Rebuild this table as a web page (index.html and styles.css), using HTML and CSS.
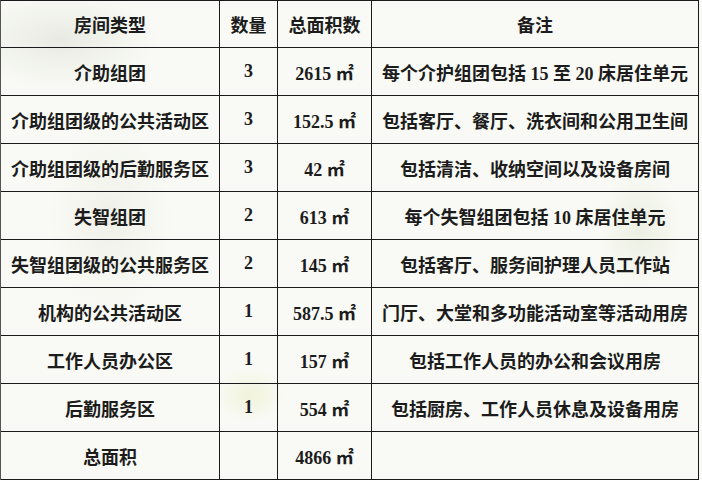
FILE: index.html
```html
<!DOCTYPE html>
<html lang="zh">
<head>
<meta charset="utf-8">
<title>房间类型</title>
<link rel="stylesheet" href="styles.css">
</head>
<body>
<div class="sheet">
  <div class="grid">
    <div class="cell head">房间类型</div>
    <div class="cell head">数量</div>
    <div class="cell head">总面积数</div>
    <div class="cell head">备注</div>

    <div class="cell">介助组团</div>
    <div class="cell num">3</div>
    <div class="cell num">2615 ㎡</div>
    <div class="cell"><span>每个介护组团包括 15 至 20 床居住单元</span></div>

    <div class="cell">介助组团级的公共活动区</div>
    <div class="cell num">3</div>
    <div class="cell num">152.5 ㎡</div>
    <div class="cell">包括客厅、餐厅、洗衣间和公用卫生间</div>

    <div class="cell">介助组团级的后勤服务区</div>
    <div class="cell num">3</div>
    <div class="cell num">42 ㎡</div>
    <div class="cell">包括清洁、收纳空间以及设备房间</div>

    <div class="cell">失智组团</div>
    <div class="cell num">2</div>
    <div class="cell num">613 ㎡</div>
    <div class="cell"><span>每个失智组团包括 10 床居住单元</span></div>

    <div class="cell">失智组团级的公共服务区</div>
    <div class="cell num">2</div>
    <div class="cell num">145 ㎡</div>
    <div class="cell">包括客厅、服务间护理人员工作站</div>

    <div class="cell">机构的公共活动区</div>
    <div class="cell num">1</div>
    <div class="cell num">587.5 ㎡</div>
    <div class="cell">门厅、大堂和多功能活动室等活动用房</div>

    <div class="cell">工作人员办公区</div>
    <div class="cell num">1</div>
    <div class="cell num">157 ㎡</div>
    <div class="cell">包括工作人员的办公和会议用房</div>

    <div class="cell">后勤服务区</div>
    <div class="cell num">1</div>
    <div class="cell num">554 ㎡</div>
    <div class="cell">包括厨房、工作人员休息及设备用房</div>

    <div class="cell">总面积</div>
    <div class="cell num"></div>
    <div class="cell num">4866 ㎡</div>
    <div class="cell"></div>
  </div>
</div>
</body>
</html>
```

FILE: styles.css
```css
html, body {
  margin: 0;
  padding: 0;
}

body {
  width: 702px;
  height: 480px;
  overflow: hidden;
  background:
    radial-gradient(ellipse 60px 90px at 640px 230px, rgba(205, 215, 180, 0.3), transparent 70%),
    radial-gradient(ellipse 50px 40px at 250px 395px, rgba(228, 232, 180, 0.4), transparent 70%),
    radial-gradient(ellipse 140px 70px at 60px 40px, rgba(200, 205, 192, 0.35), transparent 70%),
    radial-gradient(ellipse 90px 140px at 110px 220px, rgba(215, 220, 205, 0.3), transparent 70%),
    #f9faf5;
  font-family: "Liberation Serif", "Noto Sans CJK SC", serif;
  color: #1c1c1c;
}

.grid {
  display: grid;
  grid-template-columns: 219px 58px 94px 327px;
  grid-template-rows: 47px repeat(9, 48px);
  width: 698px;
  border-top: 1px solid #1a1a1a;
  border-left: 1px solid #555;
}

.cell {
  display: flex;
  align-items: center;
  justify-content: center;
  border-right: 1px solid #1a1a1a;
  border-bottom: 1px solid #1a1a1a;
  font-size: 18px;
  font-weight: 700;
  white-space: nowrap;
}
```
